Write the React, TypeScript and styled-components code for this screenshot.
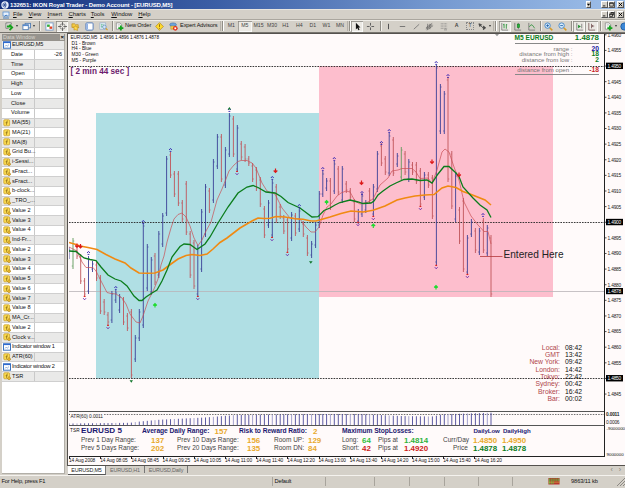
import React from "react";
import styled, { createGlobalStyle } from "styled-components";

const Color = {
  chrome: "#d4d0c8",
  chart: "#fffafa",
  up: "#3a3f96",
  down: "#c0555a",
  morning: "#b0dfe4",
  noon: "#fdbecd",
  orange: "#f08a12",
  green: "#0b7d1c",
  gold: "#e8a92c",
  navy: "#1c1870",
};

// [x, high, low, kind], kind: 0 = down bar, 1 = up bar, 2 = neutral
const BARS: [number, number, number, number][] = [
  [69, 247, 259, 1], [73, 238, 269, 2], [77, 248, 259, 0], [80.7, 254, 284, 0],
  [84.6, 278, 297, 0], [88.5, 256, 294, 1], [92.5, 261, 272, 1], [96.5, 262, 281, 0],
  [100.4, 275, 314, 0], [104.2, 299, 315, 0], [108, 312, 325, 0], [111.9, 291, 323, 1],
  [115.8, 290, 303, 1], [119.6, 294, 313, 1], [123.5, 297, 325, 0], [127.4, 313, 331, 0],
  [131.4, 309, 378, 0], [135.3, 335, 362, 1], [139.3, 309, 341, 1], [143.3, 223, 328, 1],
  [147.3, 244, 291, 1], [151.3, 257, 295, 1], [155, 253, 285, 0], [158.8, 231, 278, 1],
  [162.7, 213, 247, 1], [166.6, 156, 216, 1], [170.5, 152, 178, 0], [174.4, 171, 197, 0],
  [178.4, 171, 206, 0], [182.3, 200, 222, 0], [186.3, 181, 235, 0], [190.2, 231, 278, 0],
  [194, 240, 289, 0], [197.8, 245, 297, 1], [201.6, 209, 272, 1], [205.5, 184, 237, 1],
  [209.4, 188, 213, 0], [213.4, 159, 203, 1], [217.4, 134, 169, 1], [221.4, 134, 182, 0],
  [225.4, 147, 188, 1], [229.4, 113, 157, 1], [233.4, 116, 157, 0], [237.3, 125, 172, 1],
  [241.3, 141, 160, 0], [245.1, 144, 162, 0], [248.8, 156, 166, 0], [252.6, 163, 182, 0],
  [256.4, 167, 191, 0], [260.3, 177, 207, 0], [264.4, 206, 238, 0], [268.5, 200, 228, 1],
  [272.3, 180, 238, 1], [276.3, 184, 223, 0], [280.2, 204, 219, 0], [283.8, 215, 234, 0],
  [287.6, 217, 252, 0], [291.6, 212, 241, 1], [295.4, 213, 236, 0], [299.3, 208, 232, 1],
  [303.3, 221, 237, 0], [307.4, 235, 256, 0], [311.6, 241, 258, 1], [315.6, 222, 248, 1],
  [319.3, 191, 228, 1], [322.8, 171, 197, 1], [326.6, 178, 191, 1], [330.4, 178, 210, 0],
  [334.3, 161, 194, 1], [338.3, 166, 195, 0], [342.3, 166, 203, 1], [346.3, 181, 193, 0],
  [350.3, 188, 200, 0], [354.3, 199, 222, 0], [358.3, 209, 224, 1], [362, 193, 217, 1],
  [365.8, 200, 213, 1], [369.6, 188, 203, 0], [373.4, 184, 217, 1], [377.4, 151, 192, 1],
  [381.4, 143, 166, 0], [385.3, 156, 175, 0], [389.2, 133, 176, 1], [393.3, 137, 176, 0],
  [397.3, 153, 167, 1], [401.3, 147, 180, 2], [405.1, 151, 175, 0], [408.8, 159, 182, 1],
  [412.5, 162, 175, 0], [416.4, 162, 184, 0], [420.4, 168, 207, 0], [424.4, 172, 200, 1],
  [428.4, 172, 188, 0], [432.4, 175, 219, 0], [436.4, 65, 265, 1], [440.4, 84, 134, 1],
  [444.3, 91, 134, 1], [448, 77, 182, 0], [451.8, 151, 209, 0], [455.6, 173, 222, 1],
  [459.5, 207, 244, 0], [463.4, 198, 272, 0], [467.4, 235, 275, 1], [471.4, 219, 237, 1],
  [475.4, 228, 253, 0], [479.4, 228, 255, 1], [483.4, 218, 253, 0], [487.3, 225, 256, 1],
  [491, 235, 297, 0],
];

const MA55 =
  "69,242.5 76,244.5 80,246 88,247.5 97,249.5 106,254.5 115,259 125,263 131,268 139,273 147,273.2 155,273 163,270 171,264 178,259 186,255.5 192,254.5 200,255.5 207,254 213,249 220,242.5 227,238 240,228 252,221 258,218 264,218.5 270,218.2 276,216.5 285,217 295,218.7 303,219.2 311,221 316,221 330,217 341,213.5 351,211 363,212 373,210.3 385,206 397,200 405,198 415,196 425,195 434,194.5 442,188 448,186 456,187.5 463,191.5 470,194 485,200 491,205";
const MA21 =
  "69,251 76,251.5 84,258 90,259.5 96,260.5 101,267 108,275 115,279 121,281 127,286 134,296 139,300.5 142,300.5 146,297 152,293 157,290 162,281 167,270 172,257 180,246.5 184,244 190,244.5 197,249.5 205,244 210,237 218,223 228,207 238,193 247,187 253,185.5 258,187.5 266,192 275,193 281,196.5 288,202.5 300,208 306,212.5 312,217 318,216.7 324,210.5 330,208 335,205 340,202.5 350,200 358,202 363,203.5 371,203 374,201 378,195 383,191 390,186 396,183 404,179.5 412,179 420,180.5 427,180 432,183 438,174 444,166.5 449,166.5 456,173 459,176.5 463,187 473,198 480,205 487,210 491,217.5";
const MA8 =
  "69,247 77,251 82,262 86,267.5 93,267.5 96,271 100,279 107,292.5 111,293.5 116,294 122,298 126,304 130,314 136,322 140,323 143,316 148,301 154,289 158,279 161,265 164,256 167,242 171,228 174,219 178,214.5 182,213 186,217 190,226 194,238 198,245.5 202,240 206,231 211,222 217,200 222,189 226,179 229,171 234,165 238,161.5 241,160.5 247,160.5 252,163 256,168 262,183 267,191 275,194 282,208 290,218 300,219 306,227 311,232 315,232 319,227 323,215 327,207 331,204 337,196 341,193 346,191 350,192 355,201 360,204 367,202.5 373,199 380,185 388,178 392,171 398,170 402,168.5 412,168.5 416,172 420,178.5 428,178 432,183.5 437,170 442,152 445,149 449,152 454,167 459,180 464,202 471,216 478,225 484,231.5 488,231.5 491,244";

const PEAKS = [[88.5, 253], [115.8, 288], [143.3, 222], [170.5, 150], [229.4, 110], [272.3, 178], [299.3, 206], [322.8, 169], [334.3, 159], [381.4, 143], [389.2, 131], [362, 193], [436.2, 63], [448, 76], [483, 215]];
const TROUGHS = [[84.6, 299], [108, 328], [197.8, 299], [237, 174], [272, 240], [287.4, 255], [358, 225], [373.3, 219], [420.4, 209], [436.2, 268], [467.4, 277]];
const SELLS = [[275.5, 170.5], [361.5, 182.5], [432, 161.5], [459, 174.5], [77, 245.5], [80.5, 246]];
const BUYS = [[155, 305.5], [326.6, 202.5], [373.3, 226], [436, 287.5]];

const AXIS = ["1.4960", "1.4955", "1.4950", "1.4945", "1.4940", "1.4935", "1.4930", "1.4925", "1.4920", "1.4915", "1.4910", "1.4905", "1.4900", "1.4895", "1.4890", "1.4885", "1.4880", "1.4875", "1.4870", "1.4865", "1.4860", "1.4855", "1.4850", "1.4845"];
const ROUND = ["1.4950", "1.4900", "1.4850"];

const MENU = ["File", "View", "Insert", "Charts", "Tools", "Window", "Help"];
const MENU_WIDTHS = [15.5, 19, 21, 22.3, 20.5, 27, 20];
const PERIODS = ["M1", "M5", "M15", "M30", "H1", "H4", "D1", "W1", "MN"];

const DATA_ROWS: [string, string][] = [
  ["w", "EURUSD,M5"], ["", "Date"], ["", "Time"], ["", "Open"], ["", "High"], ["", "Low"],
  ["", "Close"], ["", "Volume"], ["f", "MA(55)"], ["f", "MA(21)"], ["f", "MA(8)"],
  ["c", "Grid Bu..."], ["c", "i-Sessi..."], ["c", "sFract..."], ["c", "sFract..."], ["c", "b-clock..."],
  ["c", "_TRO_..."], ["c", "Value 2"], ["c", "Value 3"], ["c", "Value 4"], ["c", "Ind-Fr..."],
  ["c", "Value 2"], ["c", "Value 3"], ["c", "Value 4"], ["c", "Value 5"], ["c", "Value 6"],
  ["c", "Value 7"], ["c", "Value 8"], ["c", "MA_Cr..."], ["c", "Value 2"], ["c", "Clock v..."],
  ["w", "Indicator window 1"], ["c", "ATR(60)"], ["w", "Indicator window 2"], ["c", "TSR"],
];

const CLOCKS = [["Local:", "08:42"], ["GMT", "13:42"], ["New York:", "09:42"], ["London:", "14:42"], ["Tokyo:", "22:42"], ["Sydney:", "00:42"], ["Broker:", "16:42"], ["Bar:", "00:02"]];
const TIMES = ["14 Aug 2008", "14 Aug 08:05", "14 Aug 08:45", "14 Aug 09:25", "14 Aug 10:05", "14 Aug 11:00", "14 Aug 11:40", "14 Aug 12:20", "14 Aug 13:00", "14 Aug 13:40", "14 Aug 14:20", "14 Aug 15:00", "14 Aug 15:40", "14 Aug 16:20"];

const atrTop = (x: number) => {
  const pts = [[69, 423.5], [130, 422.8], [140, 421.5], [160, 419.7], [205, 417.5], [236, 415], [320, 414], [360, 414], [400, 416], [432, 416.5], [444, 414.3], [492, 412.7]];
  const i = Math.max(1, pts.findIndex((p) => p[0] >= x));
  const [a, b] = [pts[i - 1], pts[i]];
  return a[1] + ((b[1] - a[1]) * (x - a[0])) / (b[0] - a[0]);
};

const GLYPHS: Record<string, React.ReactNode> = {
  newChart: (
    <>
      <path d="M1 1h6v2M1 1v6h3" fill="#fff" stroke="#777" />
      <path d="M2 5h5M5 3l3 3-3 3" stroke="#16a01c" strokeWidth="2" />
    </>
  ),
  windows: (
    <>
      <rect x="3.5" y="1.5" width="6" height="5" fill="#dce9f8" stroke="#5580b5" />
      <rect x="1" y="3" width="6" height="5.5" fill="#fff" stroke="#5580b5" />
      <path d="M1 4h6" stroke="#3c78c8" />
    </>
  ),
  market: (
    <>
      <rect x="1" y="1" width="8" height="8" fill="#fff" stroke="#7a9cc8" />
      <path d="M2.3 2.8h3v2.6h-3z" fill="#2eaa3a" />
      <path d="M5 5h3v2.6h-3z" fill="#e04428" />
    </>
  ),
  target: (
    <>
      <circle cx="5" cy="5" r="3" stroke="#777" strokeWidth=".8" />
      <path d="M5 0v4M5 6v4M0 5h4M6 5h4" stroke="#444" strokeWidth=".8" />
    </>
  ),
  folder: (
    <>
      <path d="M1 2h3l1 1h3v3H1z" fill="#f5cc48" stroke="#b98a1a" strokeWidth=".7" />
      <path d="M5 4l1.3 1.7 2.7.3-2 1.3.4 2.2L5 8.5 3.2 9l.4-2L2 5.8l2.2-.2z" fill="#ffd94a" stroke="#b98a1a" strokeWidth=".6" />
    </>
  ),
  terminal: (
    <>
      <rect x="1" y="1" width="8" height="8" rx="1" fill="#fff" stroke="#4c76b8" />
      <path d="M2.4 2v6" stroke="#7aa2e0" strokeWidth="1.5" />
    </>
  ),
  tester: (
    <>
      <rect x="1" y="1" width="6.5" height="7" fill="#eef4fb" stroke="#8aa6c8" strokeWidth=".7" />
      <path d="M2 3h4M2 5h3M3 2v5" stroke="#6b9" strokeWidth=".7" />
      <circle cx="6" cy="5.5" r="2" fill="#cfe4fa" stroke="#678fb8" strokeWidth=".8" />
      <path d="M7.5 7L9.5 9" stroke="#d8a030" strokeWidth="1.4" />
    </>
  ),
  order: (
    <>
      <path d="M1.5 1h4l2 2v5h-6z" fill="#fff" stroke="#777" strokeWidth=".7" />
      <path d="M3 3h3M3 4.5h2" stroke="#999" strokeWidth=".6" />
      <path d="M6.5 4v5.5M3.7 6.7h5.6" stroke="#12a41c" strokeWidth="2" />
    </>
  ),
  alert: (
    <>
      <path d="M5 .7L9.3 5 5 9.3.7 5z" fill="#ffdb2e" stroke="#b58a12" strokeWidth=".8" />
      <path d="M5 2.5v3M5 6.5v1" stroke="#8a6410" strokeWidth="1" />
    </>
  ),
  expert: (
    <>
      <ellipse cx="4.5" cy="3" rx="3.7" ry="2" fill="#6aa4e0" stroke="#35639c" strokeWidth=".6" />
      <path d="M2 4.5h5L6.5 8H2z" fill="#f3cf4c" stroke="#a98420" strokeWidth=".5" />
      <circle cx="7" cy="7" r="2.6" fill="#e0301c" />
      <rect x="6" y="6" width="2" height="2" fill="#fff" />
    </>
  ),
  cursor: <path d="M3.2.8v7.4l1.6-1.6L6 9.2l1.3-.6-1.2-2.4h2.2z" fill="#111" />,
  cross: <path d="M5 1v3M5 6v3M1 5h3M6 5h3" stroke="#555" />,
  vline: <path d="M5 2v6" stroke="#444" />,
  hline: <path d="M2 5h6" stroke="#555" strokeWidth=".8" />,
  trend: <path d="M2 8l6-5.5" stroke="#666" strokeWidth=".8" />,
  channel: <path d="M1 6.5l7-5M2 9l7-5M3 2v6M5.5 2v6M1 8L8 3" stroke="#555" strokeWidth=".7" />,
  fibo: (
    <>
      <path d="M2 2h7M2 4.5h7M2 7h7" stroke="#777" strokeWidth=".8" strokeDasharray="1 .6" />
      <path d="M6.5 7.5v2M8 7.5v2" stroke="#777" strokeWidth=".7" />
    </>
  ),
  arrows: <path d="M1 2l3 1-2 2zM3 4l3 3M6 4.5l2.5 2L6 8.5z" fill="#444" stroke="#444" strokeWidth=".9" />,
  bars: (
    <>
      <path d="M2 1v8h7" stroke="#666" strokeWidth=".8" />
      <path d="M4.5 2v5M4.5 3h-1M7 2.5v5M7 3h1" stroke="#1a8a2a" strokeWidth=".9" />
    </>
  ),
  candles: (
    <>
      <path d="M2 1v8h7M6 1v7" stroke="#666" strokeWidth=".8" />
      <rect x="4.7" y="2.3" width="2.6" height="4" fill="#24b438" stroke="#12701c" strokeWidth=".6" />
    </>
  ),
  lineChart: (
    <>
      <path d="M2 1v8h7" stroke="#666" strokeWidth=".8" />
      <path d="M2.5 5.5L4.5 3l2 1 2 3" stroke="#1a8a2a" strokeWidth=".8" />
    </>
  ),
  shift: (
    <>
      <path d="M2 1v8h7M7.5 2v5" stroke="#666" strokeWidth=".8" />
      <path d="M3.5 3v4l3-2z" fill="#1a8a2a" />
    </>
  ),
  shiftEnd: <path d="M2 1v8h7M5 2v5M8 4.5H5.5l1-1.2M5.5 4.5l1 1.2" stroke="#755" strokeWidth=".9" />,
  globe: <circle cx="6" cy="5" r="4" fill="#3b87d6" stroke="#1e5a9e" />,
};

const Glyph = ({ name }: { name: string }) => (
  <Icon viewBox="0 0 10 10" fill="none">
    {name.startsWith("zoom") ? (
      <>
        <path d="M6.3 6.3L9.3 9.3" stroke="#d79a26" strokeWidth="1.7" />
        <circle cx="4" cy="4" r="3" fill="#d9ecfb" stroke="#3f83c6" />
        <path d={name === "zoomIn" ? "M2.5 4h3M4 2.5v3" : "M2.5 4h3"} stroke="#2263a8" />
      </>
    ) : (
      GLYPHS[name]
    )}
  </Icon>
);

const RowIcon = ({ kind }: { kind: string }) =>
  kind === "w" ? (
    <SmallIcon viewBox="0 0 8 8" fill="none">
      <rect x=".5" y=".8" width="7" height="6.4" fill="#fff" stroke="#3c74c0" />
      <path d="M.5 1.4h7" stroke="#2f6ad0" strokeWidth="1.4" />
      <path d="M2 5.5L3.3 4l1 1.2L6 3.5" stroke="#6c94cc" strokeWidth=".7" />
    </SmallIcon>
  ) : (
    <SmallIcon viewBox="0 0 8 8" fill="none">
      <rect x=".8" y=".8" width="5.8" height="6" rx=".8" fill="#fbdc50" stroke="#c79a22" strokeWidth=".7" />
      <path d="M4.8 2c-1.3-.3-1.1 1-1.3 3.8M2.6 3.7h2" stroke="#8b6914" strokeWidth=".7" />
      {kind === "c" && <path d="M6 4.5L8 6.2 6 8 4.3 6.2z" fill="#e8b52c" stroke="#9c7516" strokeWidth=".5" />}
    </SmallIcon>
  );

const TitleBar = () => (
  <Title>
    <Logo viewBox="0 0 8 8">
      <circle cx="4" cy="4" r="3.7" fill="#e8eefc" />
      <path d="M1 4h5M4 1v6M2 2l3 4M5 2L2 6" stroke="#20408c" strokeWidth=".7" />
    </Logo>
    <TitleText>132651: IKON Royal Trader - Demo Account - [EURUSD,M5]</TitleText>
    <WinButton $gap={10}>
      <svg viewBox="0 0 6 6"><path d="M1 2h4L3 4.5z" /></svg>
    </WinButton>
    <WindowButtons />
  </Title>
);

const WindowButtons = ({ restore }: { restore?: boolean }) => (
  <>
    <WinButton $wide>
      <svg viewBox="0 0 6 6"><path d="M1 4.2h3v1H1z" /></svg>
    </WinButton>
    <WinButton $wide $gap={2}>
      <svg viewBox="0 0 6 6">
        <path
          d={restore ? "M2 .5h3.5v3H4.5M.8 2.3h3.4v3H.8zM.8 2.8h3.4M2 1h3.5" : "M.8 1h4.4v4H.8zM.8 1.5h4.4"}
          fill="none"
          stroke="#000"
          strokeWidth=".8"
        />
      </svg>
    </WinButton>
    <WinButton $wide>
      <svg viewBox="0 0 6 6"><path d="M1 1l4 4M5 1L1 5" stroke="#000" strokeWidth="1.1" /></svg>
    </WinButton>
  </>
);

const Toolbar = () => (
  <Tools>
    <Slot $w={11}><Glyph name="newChart" /></Slot>
    <Caret />
    <Slot $w={12}><Glyph name="windows" /></Slot>
    <Caret />
    <Separator $w={5} />
    <Slot $w={14}><Glyph name="market" /></Slot>
    <Slot $w={12} $on><Glyph name="target" /></Slot>
    <Slot $w={14}><Glyph name="folder" /></Slot>
    <Slot $w={14}><Glyph name="terminal" /></Slot>
    <Slot $w={14}><Glyph name="tester" /></Slot>
    <Separator $w={4} />
    <Slot $w={11}><Glyph name="order" /></Slot>
    <Caption $w={28}>New Order</Caption>
    <Slot $w={13}><Glyph name="alert" /></Slot>
    <Slot $w={14}><Glyph name="expert" /></Slot>
    <Caption $w={39.5}>Expert Advisors</Caption>
    <Separator $w={5} $grip />
    {PERIODS.map((p) => (
      <Slot key={p} $w={13.6} $on={p === "M5"}>{p}</Slot>
    ))}
    <Separator $w={4.6} $grip />
    <Slot $w={12} $on><Glyph name="cursor" /></Slot>
    <Slot $w={15}><Glyph name="cross" /></Slot>
    <Separator $w={3.5} />
    <Slot $w={14}><Glyph name="vline" /></Slot>
    <Slot $w={13.5}><Glyph name="hline" /></Slot>
    <Slot $w={13.5}><Glyph name="trend" /></Slot>
    <Slot $w={13.5}><Glyph name="channel" /></Slot>
    <Slot $w={13.5}><Glyph name="fibo" /></Slot>
    <Slot $w={13.5}><b>A</b></Slot>
    <Slot $w={13.5}><LabelBox>T</LabelBox></Slot>
    <Slot $w={11}><Glyph name="arrows" /></Slot>
    <Caret />
    <Separator $w={6} $grip />
    <Slot $w={12} $on><Glyph name="bars" /></Slot>
    <Slot $w={14}><Glyph name="candles" /></Slot>
    <Slot $w={14}><Glyph name="lineChart" /></Slot>
    <Separator $w={2.5} />
    <Slot $w={14}><Glyph name="zoomIn" /></Slot>
    <Slot $w={14}><Glyph name="zoomOut" /></Slot>
    <Separator $w={3.5} />
    <Slot $w={12.5} $on><Glyph name="shift" /></Slot>
    <Slot $w={12.5} $on><Glyph name="shiftEnd" /></Slot>
    <Separator $w={5} />
    <Slot $w={11}><Glyph name="order" /></Slot>
    <Caret />
    <Slot $w={10}><Glyph name="globe" /></Slot>
  </Tools>
);

const DataWindow = () => (
  <Side>
    <SideTitle><span>Data Window</span><i>×</i></SideTitle>
    <SideBody>
      {DATA_ROWS.map(([kind, name], i) => (
        <DataRow key={i} $shade={i % 2 === 0}>
          {kind === "w" ? (
            <WideCell><RowIcon kind={kind} />{name}</WideCell>
          ) : (
            <>
              <NameCell $plain={!kind}>{kind && <RowIcon kind={kind} />}{name}</NameCell>
              <ValueCell>{name === "Date" ? "-26" : ""}</ValueCell>
            </>
          )}
        </DataRow>
      ))}
    </SideBody>
  </Side>
);

const PricePlot = () => (
  <Plot viewBox="69 34 556 377" height="377">
    <rect x="96" y="113" width="223" height="265.5" fill={Color.morning} />
    <rect x="319" y="66" width="234" height="231" fill={Color.noon} />
    <path d="M69 291.5H604" stroke="#b9b4b8" strokeWidth=".8" />
    <path d="M69 66.5H604M69 222.5H604M69 378.5H604" stroke="#222" strokeWidth=".9" strokeDasharray="1.6 1.1" />
    {BARS.map(([x, hi, lo, dir]) => {
      const stroke = [Color.down, Color.up, "#5d9a5a"][dir];
      const open = dir ? lo - 3 : hi + 3;
      const close = dir ? hi + 3 : lo - 3;
      return (
        <g key={x} stroke={stroke}>
          <path d={`M${x} ${hi}V${lo}`} strokeWidth=".9" />
          <path d={`M${x - 1.3} ${open}H${x}M${x} ${close}h1.3`} strokeWidth=".6" />
        </g>
      );
    })}
    <polyline points={MA8} stroke="#c94f55" strokeWidth=".7" />
    <polyline points={MA55} stroke={Color.orange} strokeWidth="1.6" />
    <polyline points={MA21} stroke={Color.green} strokeWidth="1.3" />
    {PEAKS.map(([x, y]) => (
      <path key={`p${x}`} d={`M${x - 1.4} ${y}l1.4-1.6 1.4 1.6M${x - 0.9} ${y + 1.4}h1.8`} stroke="#3020b0" strokeWidth=".9" />
    ))}
    {TROUGHS.map(([x, y]) => (
      <g key={`t${x}`}>
        <path d={`M${x - 1.4} ${y - 0.8}l1.4 1.6 1.4-1.6`} stroke="#6a28a8" strokeWidth=".9" />
        <path d={`M${x - 0.9} ${y - 2.6}h1.8`} stroke="#e02020" strokeWidth="1.2" />
      </g>
    ))}
    <path d="M227.7 109.5h3.4l-1.7-2.5zM129.6 380.3h3.4l-1.7 2.5zM309 261.3h3.6l-1.8 2.5z" fill="#11762c" />
    {SELLS.map(([x, y]) => (
      <path key={`s${x}`} d={`M${x} ${y - 2}v3.6M${x - 1.8} ${y}l1.8 1.8 1.8-1.8`} stroke="#dc1818" strokeWidth="1.2" />
    ))}
    {BUYS.map(([x, y]) => (
      <path key={`b${x}`} d={`M${x} ${y + 2}v-3.6M${x - 1.8} ${y}l1.8-1.8 1.8 1.8`} stroke="#1fdc30" strokeWidth="1.2" />
    ))}
    <path d="M480 256.5H502.5" stroke="#b4383c" strokeWidth=".8" />
    <path d="M495 34h4l-2 2.3z" fill="#999" />
    <path d="M604.5 34V411" stroke="#222" strokeWidth="1" />
    {AXIS.map((price, i) => {
      const y = 34.8 + i * 15.62;
      const round = ROUND.includes(price);
      return (
        <g key={price}>
          <path d={`M604.5 ${y}h2`} stroke="#222" strokeWidth=".8" />
          {round && <rect x="606" y={y - 3.4} width="17" height="6.4" fill="#000" />}
          <AxisText x="607.6" y={y + 1.9} textLength="13.6" $light={round}>{price}</AxisText>
        </g>
      );
    })}
    <rect x="606" y="288" width="17" height="6.2" fill="#000" />
    <AxisText x="607.6" y="293.2" textLength="13.6" $light>1.4878</AxisText>
    <EntryText x="503.5" y="257.6" textLength="60" lengthAdjust="spacingAndGlyphs">Entered Here</EntryText>
  </Plot>
);

const PricePane = () => (
  <Price>
    <PricePlot />
    <Legend>
      <Ohlc>EURUSD,M5&nbsp; 1.4896 1.4896 1.4876 1.4878</Ohlc>
      <div>D1 - Brown</div>
      <div>H4 - Blue</div>
      <div>M30 - Green</div>
      <div>M5 - Purple</div>
      <Countdown>[ 2 min 44 sec ]</Countdown>
    </Legend>
    <Quote>
      <QuoteHead><span>M5 EURUSD</span><strong>1.4878</strong></QuoteHead>
      <QuoteRow $color="#1414a0"><span>range :</span><b>20</b></QuoteRow>
      <QuoteRow $color="#0b7d1c"><span>distance from high :</span><b>18</b></QuoteRow>
      <QuoteRow $color="#0b7d1c"><span>distance from low :</span><b>2</b></QuoteRow>
      <QuoteRow $color="#c81e28" $last><span>distance from open :</span><b>-18</b></QuoteRow>
    </Quote>
    <ClockList>
      {CLOCKS.map(([city, time]) => (
        <React.Fragment key={city}><span>{city}</span><time>{time}</time></React.Fragment>
      ))}
    </ClockList>
  </Price>
);

const AtrPane = () => (
  <Plot viewBox="69 411 556 15" height="15">
    <path d="M69 411.5H604.5" stroke="#555" strokeWidth="1.2" />
    <path d="M69 414.5H604" stroke="#333" strokeWidth=".7" strokeDasharray="1.5 1.2" />
    {BARS.map(([x], i) => (
      <path key={x} d={`M${x} 425.5V${atrTop(x)}`} stroke={i % 5 === 2 ? "#9a98c8" : "#4a4898"} strokeWidth=".9" />
    ))}
    <rect x="70" y="413" width="34" height="5" fill={Color.chart} />
    <AxisText x="70.5" y="418" textLength="32.5">ATR(60) 0.0011</AxisText>
    <path d="M604.5 411V426" stroke="#222" />
    <path d="M69 425.5H604.5" stroke="#555" strokeWidth="1" />
    <AxisText x="606" y="416.3" textLength="13.5" $bold>0.0011</AxisText>
    <AxisText x="606" y="423.6" textLength="13.5">0.0006</AxisText>
  </Plot>
);

const StatsPane = () => (
  <Stats>
    <StatsMain>
      <HeadRow>
        <Tiny>TSR</Tiny>
        <Symbol>EURUSD 5</Symbol>
        <Heading>Average Daily Range:</Heading>
        <Num>157</Num>
        <Heading>Risk to Reward Ratio:</Heading>
        <Num>2</Num>
        <Heading>Maximum StopLosses:</Heading>
        <Heading $narrow>DailyLow</Heading>
        <Heading $narrow>DailyHigh</Heading>
      </HeadRow>
      <StatRow>
        <i />
        <span>Prev 1 Day Range:</span><Num>137</Num>
        <span>Prev 10 Days Range:</span><Num>156</Num>
        <span>Room UP:</span><Num>129</Num>
        <span>Long:</span><Num $c="#2fbf3c">64</Num>
        <span>Pips at</span><Num $c="#2fb23c">1.4814</Num>
        <span>Curr/Day</span><Num>1.4850</Num><Num>1.4950</Num>
      </StatRow>
      <StatRow>
        <i />
        <span>Prev 5 Days Range:</span><Num>202</Num>
        <span>Prev 20 Days Range:</span><Num>135</Num>
        <span>Room DN:</span><Num>84</Num>
        <span>Short:</span><Num $c="#cc1c20">42</Num>
        <span>Pips at</span><Num $c="#cc1c20">1.4920</Num>
        <PriceLabel>Price</PriceLabel><Num $c="#0b7d1c">1.4878</Num><Num $c="#0b7d1c">1.4878</Num>
      </StatRow>
    </StatsMain>
    <StatsScale><span>-9000000</span><span>9000000</span></StatsScale>
  </Stats>
);

const App = () => (
  <Window>
    <Reset />
    <TitleBar />
    <MenuBar>
      <DocIcon viewBox="0 0 8 8" fill="none">
        <rect x="1" y="1" width="6" height="4" fill="#e6f0fc" stroke="#5a8fd0" strokeWidth=".8" />
        <path d="M1 7h6M2.5 5.5L4 4l1.5 1" stroke="#3b78c4" strokeWidth=".9" />
      </DocIcon>
      {MENU.map((m, i) => (
        <MenuItem key={m} $w={MENU_WIDTHS[i]}><u>{m[0]}</u>{m.slice(1)}</MenuItem>
      ))}
      <Spacer />
      <WindowButtons restore />
    </MenuBar>
    <Toolbar />
    <Workspace>
      <DataWindow />
      <ChartArea>
        <ChartFrame>
          <PricePane />
          <AtrPane />
          <StatsPane />
          <TimeAxis>{TIMES.map((t) => <span key={t}>{t}</span>)}</TimeAxis>
        </ChartFrame>
        <Tabs>
          <Tab $w={38} $active>EURUSD,M5</Tab>
          <Tab $w={39}>EURUSD,H1</Tab>
          <Tab $w={43}>EURUSD,Daily</Tab>
          <Spacer />
          <ScrollArrows><span>‹</span><span>›</span></ScrollArrows>
        </Tabs>
      </ChartArea>
    </Workspace>
    <StatusBar>
      <Status $w={273}>For Help, press F1</Status>
      <Status $w={53}>Default</Status>
      <Status $w={49} />
      <Status $w={35} />
      <Status $w={35} />
      <Status $w={34} />
      <Status $w={34} />
      <Signal viewBox="0 0 12 7">
        <rect width="12" height="7" fill="#b8372c" />
        <path d="M1 .5v6M3 .5v6M5 .5v6M7 .5v3M9 .5v3M11 .5v3" stroke="#58b83c" />
        <path d="M0 4.5h12" stroke="#dcc04a" strokeWidth=".6" />
      </Signal>
      <Traffic>9863/11 kb</Traffic>
      <Grip viewBox="0 0 8 8"><path d="M0 8l8-8M3 8l5-5M6 8l2-2" stroke="#8c8984" /></Grip>
    </StatusBar>
  </Window>
);

export default App;

const Reset = createGlobalStyle`
  * { box-sizing: border-box; }
  body { margin: 0; overflow: hidden; }
`;

const Window = styled.div`
  width: 625px;
  height: 488px;
  display: flex;
  flex-direction: column;
  overflow: hidden;
  background: ${Color.chrome};
  color: #111;
  font: 5.9px/1 "Liberation Sans", Arial, sans-serif;
  white-space: nowrap;
`;

const Title = styled.header`
  height: 9px;
  flex: none;
  display: flex;
  align-items: center;
  padding: 0 1px;
  background: linear-gradient(90deg, #14307c, #3c5fa6 35%, #7599d0 70%, #9fc0ea);
`;

const Logo = styled.svg`
  width: 8px;
  height: 8px;
`;

const TitleText = styled.div`
  flex: 1;
  padding-left: 1px;
  color: #fff;
  font-size: 6px;
  font-weight: bold;
  letter-spacing: -0.12px;
`;

const WinButton = styled.button<{ $wide?: boolean; $gap?: number }>`
  width: ${(props) => (props.$wide ? 7 : 5)}px;
  height: 7px;
  margin: 0 ${(props) => props.$gap ?? 0}px 0 0;
  padding: 0;
  display: flex;
  align-items: center;
  justify-content: center;
  border: solid;
  border-width: 0.5px 1px 1px 0.5px;
  border-color: #fff #555 #555 #fff;
  background: ${Color.chrome};

  svg {
    width: 5px;
    height: 5px;
    flex: none;
  }
`;

const MenuBar = styled.nav`
  height: 10px;
  flex: none;
  display: flex;
  align-items: center;
  padding: 0 1px 0 2px;
  border-top: 1px solid #e8e5df;
`;

const DocIcon = styled.svg`
  width: 8px;
  height: 8px;
  margin-right: 3px;
`;

const MenuItem = styled.span<{ $w: number }>`
  width: ${(props) => props.$w}px;
  font-size: 5.9px;

  u {
    text-decoration-thickness: 0.5px;
  }
`;

const Spacer = styled.div`
  flex: 1;
`;

const Tools = styled.div`
  height: 14px;
  flex: none;
  display: flex;
  align-items: center;
  padding-left: 4px;
  border-top: 1px solid #aaa69e;
  border-bottom: 1px solid #77746e;
  box-shadow: inset 0 1px #efede8;
  overflow: hidden;
`;

const Slot = styled.span<{ $w: number; $on?: boolean }>`
  width: ${(props) => props.$w}px;
  height: 11px;
  flex: none;
  display: flex;
  align-items: center;
  justify-content: center;
  color: #444;
  font-size: 5.2px;
  background: ${(props) => (props.$on ? "#ebe9e4" : "none")};
  box-shadow: ${(props) => (props.$on ? "inset 0.7px 0.7px #85827c, inset -0.7px -0.7px #fff" : "none")};
`;

const LabelBox = styled.span`
  padding: 0.5px 1.3px;
  border: 1px dotted #888;
`;

const Caret = styled.i`
  width: 0;
  margin: 0 2px 0 1px;
  border: 1.5px solid transparent;
  border-top: 2px solid #333;
  border-bottom: 0;
`;

const Separator = styled.i<{ $w: number; $grip?: boolean }>`
  width: 1px;
  height: 10px;
  flex: none;
  margin: 0 ${(props) => (props.$w - 1) / 2}px;
  background: #908d86;
  box-shadow: ${(props) => (props.$grip ? "-2px 0 #b5b1a9, 1px 0 #fff" : "1px 0 #f2f0eb")};
`;

const Caption = styled.span<{ $w: number }>`
  width: ${(props) => props.$w}px;
  flex: none;
  font-size: 5.6px;
  letter-spacing: -0.1px;
`;

const Icon = styled.svg`
  width: 9px;
  height: 9px;
`;

const SmallIcon = styled.svg`
  width: 8px;
  height: 8px;
  flex: none;
`;

const Workspace = styled.main`
  height: 442px;
  flex: none;
  display: flex;
`;

const Side = styled.aside`
  width: 67px;
  flex: none;
  padding: 1px 2px 1px 2px;
  display: flex;
  flex-direction: column;
`;

const SideTitle = styled.div`
  height: 6.5px;
  flex: none;
  display: flex;
  align-items: center;
  justify-content: space-between;
  padding: 0 1px;
  background: #96938d;
  color: #d6d3cc;
  font-size: 5.4px;

  i {
    height: 6px;
    background: ${Color.chrome};
    color: #000;
    font: bold 6px/6px "Liberation Sans", sans-serif;
  }
`;

const SideBody = styled.div`
  flex: 1;
  background: #fff;
  border-right: 1px solid #b2afa8;
  border-bottom: 1px solid #b2afa8;
`;

const DataRow = styled.div<{ $shade: boolean }>`
  height: 9.75px;
  display: flex;
  background: ${(props) => (props.$shade ? "#e9e9e8" : "#fff")};
  border-bottom: 0.5px solid #cfcfcf;
  font-size: 5.6px;
`;

const WideCell = styled.div`
  display: flex;
  align-items: center;
  gap: 1px;
  padding-left: 1px;
  letter-spacing: -0.2px;
`;

const NameCell = styled.div<{ $plain: boolean }>`
  width: 33px;
  flex: none;
  display: flex;
  align-items: center;
  gap: 1px;
  padding-left: ${(props) => (props.$plain ? 9 : 1)}px;
  border-right: 1px solid #c9c9c9;
`;

const ValueCell = styled.div`
  flex: 1;
  padding: 2px 2px 0 0;
  text-align: right;
`;

const ChartArea = styled.section`
  flex: 1;
  display: flex;
  flex-direction: column;
`;

const ChartFrame = styled.div`
  height: 433px;
  flex: none;
  display: flex;
  flex-direction: column;
  padding-left: 1px;
  border-top: 1px solid #55524e;
  border-left: 1px solid #55524e;
  border-bottom: 1px solid #55524e;
  background: ${Color.chart};
`;

const Plot = styled.svg`
  width: 556px;
  flex: none;
  display: block;
  fill: none;
`;

const Price = styled.div`
  position: relative;
  height: 377px;
  flex: none;
`;

const AxisText = styled.text<{ $light?: boolean; $bold?: boolean }>`
  fill: ${(props) => (props.$light ? "#fff" : "#222")};
  font-size: 4.8px;
  font-weight: ${(props) => (props.$bold ? "bold" : "normal")};
`;

const EntryText = styled.text`
  fill: #222;
  font-size: 10.2px;
`;

const Legend = styled.div`
  position: absolute;
  left: 1.5px;
  top: 0.8px;
  font-size: 4.8px;
  line-height: 5.8px;

  div {
    padding-left: 1px;
  }
`;

const Ohlc = styled.p`
  margin: 0;
  font-size: 4.7px;
  letter-spacing: -0.08px;
`;

const Countdown = styled.p`
  margin: 2.8px 0 0;
  color: #6c1a6c;
  font: bold 8.2px/10px "Liberation Sans", sans-serif;
`;

const Quote = styled.div`
  position: absolute;
  left: 445.5px;
  top: 0;
  width: 84.5px;
  color: #777;
`;

const QuoteHead = styled.div`
  height: 9.5px;
  display: flex;
  align-items: center;
  justify-content: space-between;
  border-bottom: 1px solid #888;
  color: ${Color.green};
  font-size: 6.6px;
  font-weight: bold;

  strong {
    font-size: 7.9px;
  }
`;

const QuoteRow = styled.div<{ $color: string; $last?: boolean }>`
  height: ${(props) => (props.$last ? 9 : 5.8)}px;
  display: flex;
  align-items: center;
  justify-content: flex-end;
  margin-top: ${(props) => (props.$last ? 3.2 : 0)}px;
  border-bottom: ${(props) => (props.$last ? "1px solid #888" : "none")};
  font-size: 6.1px;
  line-height: 5.7px;

  ${Quote} &:nth-child(2) {
    margin-top: 2px;
  }

  b {
    width: 26.5px;
    color: ${(props) => props.$color};
    text-align: right;
    font-size: 6.7px;
  }
`;

const ClockList = styled.div`
  position: absolute;
  left: 440px;
  top: 309.8px;
  display: grid;
  grid-template-columns: 51px 18px;
  column-gap: 4px;
  grid-auto-rows: 7.3px;
  line-height: 7.3px;
  font-size: 6.8px;
  text-align: right;

  span {
    color: #b0454a;
  }
`;

const Stats = styled.div`
  height: 31px;
  flex: none;
  display: flex;
`;

const StatsMain = styled.div`
  width: 536px;
  border-right: 1px solid #222;
  border-bottom: 1px solid #222;
  padding-top: 1px;
`;

const HeadRow = styled.div`
  height: 9px;
  display: grid;
  grid-template-columns: 11px 61px 72.5px 24.5px 74px 29px 131.5px 29.5px 30px;
  align-items: center;
  padding-left: 1px;
`;

const Heading = styled.h4<{ $narrow?: boolean }>`
  margin: 0;
  color: ${Color.navy};
  font-size: ${(props) => (props.$narrow ? 6.1 : 6.7)}px;
  letter-spacing: -0.06px;
`;

const StatRow = styled.div`
  height: 8px;
  display: grid;
  grid-template-columns: 11px 70px 26px 70px 27px 34px 34px 20px 16px 26px 39px 30px 29px 30px;
  align-items: center;
  padding-left: 1px;
  color: #444;
  font-size: 6.5px;
`;

const Tiny = styled.small`
  font-size: 4.8px;
`;

const Symbol = styled.strong`
  color: ${Color.navy};
  font-size: 8.1px;
`;

const Num = styled.b<{ $c?: string }>`
  color: ${(props) => props.$c ?? Color.gold};
  font-size: 7.9px;
  line-height: 7px;
`;

const PriceLabel = styled.span`
  padding-left: 10px;
`;

const StatsScale = styled.div`
  flex: 1;
  display: flex;
  flex-direction: column;
  justify-content: space-between;
  padding: 1px 0 0 1.5px;
  overflow: hidden;
  font-size: 4.4px;
`;

const TimeAxis = styled.div`
  height: 8px;
  display: grid;
  grid-template-columns: repeat(14, 31.2px);
  align-items: center;
  font-size: 4.8px;
  letter-spacing: -0.07px;

  span {
    position: relative;
  }

  span::before {
    content: "";
    position: absolute;
    left: 0;
    top: -2px;
    height: 2px;
    border-left: 1px solid #222;
  }
`;

const Tabs = styled.div`
  height: 9px;
  flex: none;
  display: flex;
  align-items: flex-start;
  padding-left: 1px;
`;

const Tab = styled.div<{ $w: number; $active?: boolean }>`
  width: ${(props) => props.$w}px;
  height: ${(props) => (props.$active ? 9 : 7)}px;
  padding-top: 1.6px;
  text-align: center;
  font-size: 5.4px;
  letter-spacing: -0.15px;
  color: ${(props) => (props.$active ? "#222" : "#666")};
  background: ${(props) => (props.$active ? "#fff" : "none")};
  border-right: 1px solid #777;
  border-bottom: ${(props) => (props.$active ? "1px solid #555" : "none")};
`;

const ScrollArrows = styled.div`
  display: flex;
  gap: 6px;
  padding-right: 4px;
  color: #85827c;
  font-size: 7px;
`;

const StatusBar = styled.footer`
  flex: 1;
  display: flex;
  align-items: center;
  padding-bottom: 1px;
  border-top: 1px solid #f4f2ee;
`;

const Status = styled.div<{ $w: number }>`
  width: ${(props) => props.$w}px;
  height: 9px;
  flex: none;
  padding: 1.7px 0 0 1.5px;
  border-right: 1px solid #a8a49c;
  font-size: 5.7px;
  letter-spacing: -0.18px;
`;

const Signal = styled.svg`
  width: 12px;
  height: 6.5px;
  margin-left: 35px;
`;

const Traffic = styled.div`
  margin-left: 11px;
  font-size: 5.7px;
  letter-spacing: -0.08px;
`;

const Grip = styled.svg`
  width: 8px;
  height: 8px;
  margin-left: auto;
`;
